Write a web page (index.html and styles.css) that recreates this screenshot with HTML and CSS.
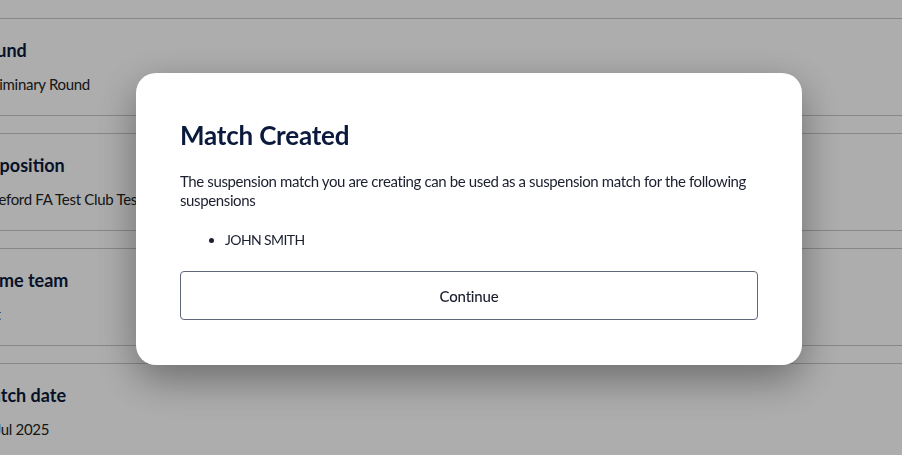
FILE: index.html
```html
<!DOCTYPE html>
<html lang="en">
<head>
<meta charset="utf-8">
<title>Match Created</title>
<link rel="stylesheet" href="styles.css">
</head>
<body>
<main class="page">
  <dl class="summary">
    <div class="summary-row">
      <dt class="label">Round</dt>
      <dd class="value">Preliminary Round</dd>
    </div>
    <div class="summary-row">
      <dt class="label">Opposition</dt>
      <dd class="value">Hereford FA Test Club Test</dd>
    </div>
    <div class="summary-row">
      <dt class="label">Home team</dt>
      <dd class="value">Test</dd>
    </div>
    <div class="summary-row">
      <dt class="label">Match date</dt>
      <dd class="value">14 Jul 2025</dd>
    </div>
  </dl>
</main>

<div class="overlay">
  <div class="modal" role="dialog" aria-labelledby="modal-title">
    <h2 class="modal-title" id="modal-title">Match Created</h2>
    <p class="modal-text">The suspension match you are creating can be used as a suspension match for the following suspensions</p>
    <ul class="modal-list">
      <li>JOHN SMITH</li>
    </ul>
    <button class="btn-continue" type="button">Continue</button>
  </div>
</div>
</body>
</html>
```

FILE: styles.css
```css
* { box-sizing: border-box; }

html, body {
  margin: 0;
  padding: 0;
  height: 100%;
  overflow: hidden;
}

body {
  background: #ffffff;
  font-family: "Lato", "Noto Sans", sans-serif;
  color: #1b1f2e;
}

.page {
  margin-left: -25px;
  padding-top: 18px;
}

.summary {
  margin: 0;
  display: flex;
  flex-direction: column;
  gap: 17px;
}

.summary-row {
  border-top: 1px solid #c8c8c8;
  border-bottom: 1px solid #c8c8c8;
  padding: 19px 0;
  height: 98px;
}

.label {
  font-size: 18px;
  line-height: 24px;
  font-weight: 700;
  color: #0b1a3c;
  margin: 0;
}

.value {
  margin: 11px 0 0;
  font-size: 15px;
  line-height: 22px;
  letter-spacing: -0.3px;
  color: #222;
}

.overlay {
  position: fixed;
  inset: 0;
  background: rgba(0, 0, 0, 0.32);
  padding: 73px 0 0 136px;
}

.modal {
  width: 666px;
  height: 292px;
  background: #ffffff;
  border-radius: 20px;
  padding: 46px 44px 45px;
  box-shadow: 0 14px 40px rgba(0, 0, 0, 0.38);
}

.modal-title {
  margin: 0;
  font-size: 26px;
  line-height: 32px;
  font-weight: 700;
  letter-spacing: -0.2px;
  color: #0b1a3c;
}

.modal-text {
  margin: 21px 0 0;
  font-size: 15px;
  line-height: 19px;
  letter-spacing: -0.38px;
  color: #1b1f2e;
}

.modal-list {
  margin: 20px 0 0;
  padding-left: 45px;
  font-size: 14px;
  line-height: 19px;
  letter-spacing: -0.6px;
  color: #1b1f2e;
}

.btn-continue {
  display: block;
  width: 100%;
  height: 49px;
  margin-top: 22px;
  background: #ffffff;
  border: 1px solid #5f6675;
  border-radius: 4px;
  font-family: inherit;
  font-size: 15px;
  font-weight: 500;
  letter-spacing: -0.2px;
  color: #1b1f2e;
  cursor: pointer;
}
```
